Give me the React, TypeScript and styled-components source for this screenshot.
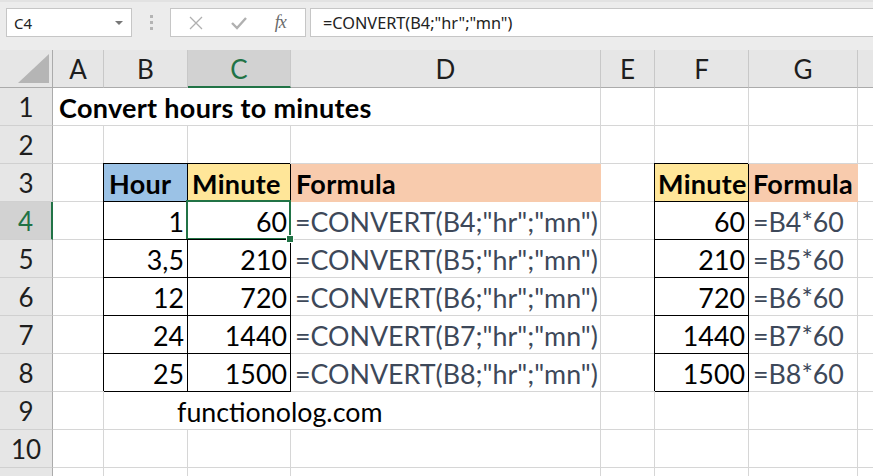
import React, {FC} from "react";
import styled, {createGlobalStyle, css} from "styled-components";

const GlobalStyle = createGlobalStyle`
    html, body {
        margin: 0;
        padding: 0;
        background: #fff;
        overflow: hidden;
    }
`

const GREEN = '#217346';
const GRID = '#D6D6D6';
const CELL_FONT = `Lato, "Open Sans", sans-serif`;
const UI_FONT = `"Noto Sans", "Open Sans", sans-serif`;

const colWidths = [53, 51, 84, 103, 310, 54, 94, 109, 40];
const colNames = ['A', 'B', 'C', 'D', 'E', 'F', 'G', ''];

const Screen = styled.div`
    width: 873px;
    height: 476px;
    overflow: hidden;
    background: #fff;
`

const FormulaBar = styled.div`
    height: 50px;
    box-sizing: border-box;
    background: #ECECEC;
    border-top: 2px solid #E2E2E2;
    padding: 6px 0 13px 6px;
    display: flex;
    align-items: stretch;
`

const NameBox = styled.div`
    width: 126px;
    box-sizing: border-box;
    background: #fff;
    border: 1px solid #C6C6C6;
    display: flex;
    align-items: center;
    justify-content: space-between;
    padding: 0 8px 0 7px;
    font-family: ${UI_FONT};
    font-size: 15px;
    color: #222;
`

const DropArrow = styled.span`
    width: 0;
    height: 0;
    border-left: 4px solid transparent;
    border-right: 4px solid transparent;
    border-top: 4px solid #777;
`

const Grip = styled.div`
    width: 38px;
    display: flex;
    flex-direction: column;
    align-items: center;
    justify-content: center;
    gap: 3px;
    span {
        width: 3px;
        height: 3px;
        background: #B4B4B4;
    }
`

const ActionBox = styled.div`
    width: 136px;
    box-sizing: border-box;
    background: #fff;
    border: 1px solid #C6C6C6;
    display: flex;
    align-items: center;
    justify-content: space-around;
    padding: 0 6px 0 4px;
`

const Fx = styled.span`
    font-family: "Liberation Serif", serif;
    font-style: italic;
    font-size: 18px;
    color: #6A6A6A;
    letter-spacing: -1px;
`

const FormulaInput = styled.div`
    flex: 1;
    margin-left: 4px;
    background: #fff;
    border: 1px solid #C6C6C6;
    border-right: none;
    display: flex;
    align-items: center;
    padding-left: 12px;
    font-family: ${UI_FONT};
    font-size: 16.3px;
    color: #222;
`

const Sheet = styled.div`
    display: grid;
    grid-template-columns: ${colWidths.map(w => w + 'px').join(' ')};
    grid-auto-rows: 38px;
    font-family: ${CELL_FONT};
`

const Corner = styled.div`
    background: #E6E6E6;
    border-right: 1px solid #ABABAB;
    border-bottom: 1px solid #ABABAB;
    box-sizing: border-box;
    display: flex;
    align-items: flex-end;
    justify-content: flex-end;
    padding: 0 3px 4px 0;
`

const ColHeader = styled.div<{ $active?: boolean }>`
    box-sizing: border-box;
    background: ${p => p.$active ? '#D2D2D2' : '#E6E6E6'};
    border-right: 1px solid #C8C8C8;
    border-bottom: ${p => p.$active ? `2px solid ${GREEN}` : '1px solid #ABABAB'};
    display: flex;
    align-items: center;
    justify-content: center;
    font-size: 26px;
    color: ${p => p.$active ? GREEN : '#1E1E1E'};
    padding-top: ${p => p.$active ? '1px' : '0'};
`

const RowHeader = styled.div<{ $active?: boolean }>`
    box-sizing: border-box;
    background: ${p => p.$active ? '#D2D2D2' : '#E6E6E6'};
    border-right: ${p => p.$active ? `2px solid ${GREEN}` : '1px solid #ABABAB'};
    border-bottom: 1px solid #D0D0D0;
    display: flex;
    align-items: center;
    justify-content: center;
    font-size: 26px;
    color: ${p => p.$active ? GREEN : '#1E1E1E'};
`

const Cell = styled.div<{
    $align?: string,
    $bold?: boolean,
    $fill?: string,
    $boxed?: boolean,
    $formula?: boolean,
    $selected?: boolean,
    $span?: number,
    $indent?: number
}>`
    position: relative;
    box-sizing: border-box;
    grid-column: span ${p => p.$span || 1};
    border-right: 1px solid ${p => p.$boxed ? '#000' : p.$fill || GRID};
    border-bottom: 1px solid ${p => p.$boxed ? '#000' : p.$fill || GRID};
    background: ${p => p.$fill || 'transparent'};
    display: flex;
    align-items: center;
    justify-content: ${p => p.$align === 'right' ? 'flex-end' : 'flex-start'};
    padding: 2px 3px 0 ${p => p.$indent ?? 5}px;
    white-space: nowrap;
    font-size: ${p => p.$bold ? '27px' : '26.8px'};
    font-weight: ${p => p.$bold ? 700 : 400};
    letter-spacing: ${p => p.$bold ? '0.3px' : '0'};
    color: ${p => p.$formula ? '#3D4859' : '#000'};
    ${p => p.$boxed && css`
        box-shadow: -1px -1px 0 #000;
    `}
    ${p => p.$selected && css`
        &::after {
            content: '';
            position: absolute;
            left: -2px;
            top: -2px;
            right: -1px;
            bottom: -1px;
            border: 2px solid ${GREEN};
            pointer-events: none;
        }
        &::before {
            content: '';
            position: absolute;
            right: -4px;
            bottom: -4px;
            width: 6px;
            height: 6px;
            background: ${GREEN};
            border: 1px solid #fff;
            z-index: 2;
        }
    `}
`

interface CellSpec {
    text?: string,
    align?: string,
    bold?: boolean,
    fill?: string,
    boxed?: boolean,
    formula?: boolean,
    selected?: boolean,
    span?: number,
    indent?: number
}

const BLUE = '#9BC2E6';
const YELLOW = '#FFE699';
const ORANGE = '#F8CBAD';

const dataRows = [
    {hours: '1', minutes: '60'},
    {hours: '3,5', minutes: '210'},
    {hours: '12', minutes: '720'},
    {hours: '24', minutes: '1440'},
    {hours: '25', minutes: '1500'},
];

// each row: list of cells from column A onward, spans eat the following columns
const buildRows = (): CellSpec[][] => {
    const rows: CellSpec[][] = [];
    rows.push([{text: 'Convert hours to minutes', bold: true, span: 4, indent: 6}, {}, {}, {}, {}]);
    rows.push([{}, {}, {}, {}, {}, {}, {}, {}]);
    rows.push([
        {},
        {text: 'Hour', bold: true, fill: BLUE, boxed: true},
        {text: 'Minute', bold: true, fill: YELLOW, boxed: true, indent: 4},
        {text: 'Formula', bold: true, fill: ORANGE},
        {},
        {text: 'Minute', bold: true, fill: YELLOW, boxed: true, indent: 3},
        {text: 'Formula', bold: true, fill: ORANGE, indent: 4},
        {},
    ]);
    dataRows.forEach((r, i) => {
        const ref = `B${i + 4}`;
        rows.push([
            {},
            {text: r.hours, align: 'right', boxed: true},
            {text: r.minutes, align: 'right', boxed: true, selected: i === 0},
            {text: `=CONVERT(${ref};"hr";"mn")`, formula: true, indent: 4},
            {},
            {text: r.minutes, align: 'right', boxed: true},
            {text: `=${ref}*60`, formula: true, indent: 4},
            {},
        ]);
    });
    rows.push([{}, {text: 'functionolog.com', span: 3, indent: 73}, {}, {}, {}, {}]);
    rows.push([{}, {}, {}, {}, {}, {}, {}, {}]);
    rows.push([{}, {}, {}, {}, {}, {}, {}, {}]);
    return rows;
}

const CornerMark: FC = () => (
    <svg width="31" height="29" viewBox="0 0 31 29">
        <polygon points="31,0 31,29 0,29" fill="#B5B5B5"/>
    </svg>
);

const CancelIcon: FC = () => (
    <svg width="16" height="16" viewBox="0 0 16 16">
        <path d="M2 2 L14 14 M14 2 L2 14" stroke="#B0B0B0" strokeWidth="1.3" fill="none"/>
    </svg>
);

const EnterIcon: FC = () => (
    <svg width="18" height="16" viewBox="0 0 18 16">
        <path d="M2 8 L7 13 L16 3" stroke="#B0B0B0" strokeWidth="2.4" fill="none"/>
    </svg>
);

const App: FC = () => {
    const rows = buildRows();
    return <Screen>
        <GlobalStyle/>
        <FormulaBar>
            <NameBox>C4<DropArrow/></NameBox>
            <Grip><span/><span/><span/></Grip>
            <ActionBox>
                <CancelIcon/>
                <EnterIcon/>
                <Fx>fx</Fx>
            </ActionBox>
            <FormulaInput>=CONVERT(B4;"hr";"mn")</FormulaInput>
        </FormulaBar>
        <Sheet>
            <Corner><CornerMark/></Corner>
            {colNames.map(name => <ColHeader key={'h' + name} $active={name === 'C'}>{name}</ColHeader>)}
            {rows.map((row, r) => {
                const cells: React.ReactNode[] = [];
                let col = 0;
                row.forEach((c, k) => {
                    if (col >= colNames.length) return;
                    cells.push(<Cell key={`${r}-${k}`}
                        $align={c.align}
                        $bold={c.bold}
                        $fill={c.fill}
                        $boxed={c.boxed}
                        $formula={c.formula}
                        $selected={c.selected}
                        $span={c.span}
                        $indent={c.indent}>{c.text}</Cell>);
                    col += c.span || 1;
                });
                while (col < colNames.length) {
                    cells.push(<Cell key={`${r}-f${col}`}/>);
                    col++;
                }
                // the last row is only a sliver at the bottom edge, its number is below the view
                const label = r < rows.length - 1 ? r + 1 : '';
                return <React.Fragment key={r}>
                    <RowHeader $active={r === 3}>{label}</RowHeader>
                    {cells}
                </React.Fragment>
            })}
        </Sheet>
    </Screen>
}

export default App
